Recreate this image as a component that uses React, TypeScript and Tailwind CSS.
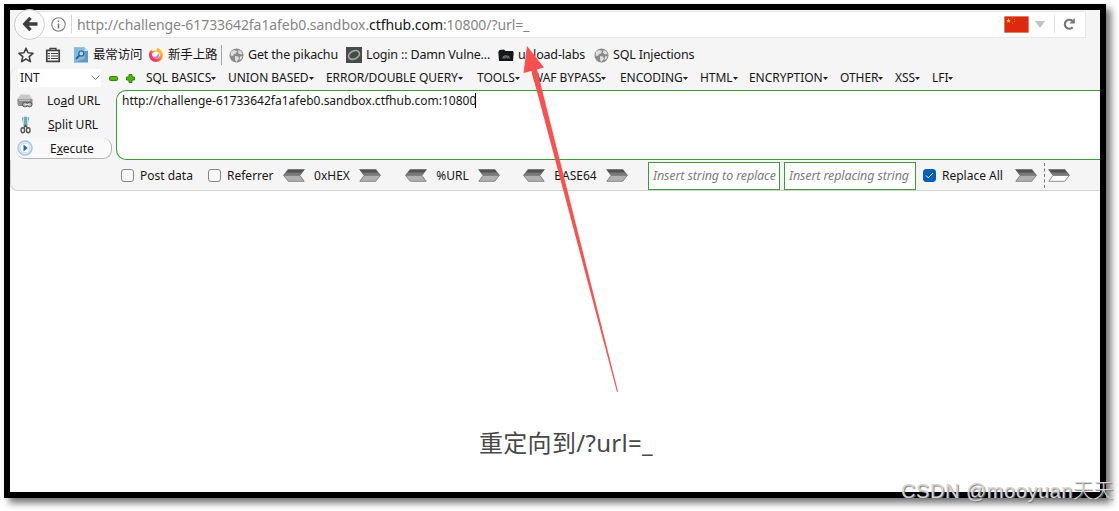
import type { ReactNode } from 'react'
import clsx from 'clsx'

const menus = [
    { label: 'SQL BASICS', width: 'w-[82px]' },
    { label: 'UNION BASED', width: 'w-[98px]' },
    { label: 'ERROR/DOUBLE QUERY', width: 'w-[151px]' },
    { label: 'TOOLS', width: 'w-[55px]' },
    { label: 'WAF BYPASS', width: 'w-[88px]' },
    { label: 'ENCODING', width: 'w-[80px]' },
    { label: 'HTML', width: 'w-[49px]' },
    { label: 'ENCRYPTION', width: 'w-[91px]' },
    { label: 'OTHER', width: 'w-[55px]' },
    { label: 'XSS', width: 'w-[37px]' },
    { label: 'LFI', width: 'w-[30px]' },
]

const BackIcon = () => (
    <svg className="h-4 w-4" viewBox="0 0 16 16" fill="none" stroke="#3d3d3d" strokeWidth="3.4">
        <path d="M8.5 1.8 2.8 8l5.700 6.200M3 8h12.500" />
    </svg>
)

const InfoIcon = () => (
    <svg className="h-[15px] w-[15px]" viewBox="0 0 15 15">
        <circle cx="7.5" cy="7.5" r="6.7" fill="none" stroke="#808080" strokeWidth="1.1" />
        <path d="M7.5 6.5v5M7.5 3.4v1.7" stroke="#777" strokeWidth="1.6" />
    </svg>
)

const FlagIcon = () => (
    <svg className="h-[17px] w-[25px]" viewBox="0 0 25 17">
        <rect width="25" height="17" fill="#dfd0d0" />
        <rect x="0.5" y="0.5" width="24" height="16" fill="#de2910" />
        <path d="m4.5 2.2.6 1.7h1.8L5.5 5l.5 1.8-1.5-1.1L3 6.8 3.5 5 2.1 3.9h1.8z" fill="#ffde00" />
        <path d="M8 1.8h1M10 3.3h1M10 5.3h1M8 7h1" stroke="#e98a10" strokeWidth="1" />
    </svg>
)

const ReloadIcon = () => (
    <svg className="h-[14px] w-[13px]" viewBox="0 0 13 14">
        <path d="M9.7 10.3A4.5 4.5 0 1 1 9.3 3.8" fill="none" stroke="#757575" strokeWidth="2.2" />
        <path d="M11.8 1v5.500H6.3z" fill="#757575" />
    </svg>
)

const StarIcon = () => (
    <svg className="h-4 w-4" viewBox="0 0 16 16" fill="none" stroke="#404040" strokeWidth="1.6" strokeLinejoin="round">
        <path d="m8 1.2 2 4.6 5 .5-3.8 3.3 1.2 5L8 12l-4.400 2.600 1.200-5L1 6.300l5-.5z" />
    </svg>
)

const ListIcon = () => (
    <svg className="h-4 w-4" viewBox="0 0 16 16" fill="none" stroke="#404040">
        <path d="M5 3V1.300h6V3" strokeWidth="1.3" />
        <rect x="1.8" y="3.4" width="12.4" height="11" strokeWidth="1.7" />
        <path d="M3 6.500h2M6 6.500h7M3 9h2M6 9h7M3 11.500h2M6 11.500h7" strokeWidth="1.2" />
    </svg>
)

const SearchPageIcon = () => (
    <svg className="h-4 w-4" viewBox="0 0 16 16">
        <path d="M1 .5h10.500L15 4v11.500H1z" fill="#5d9bc8" />
        <path d="M1 .5h10.500V12L1 15.500z" fill="#85badf" />
        <path d="M11.500.5V4H15z" fill="#cce4f4" />
        <circle cx="8.300" cy="6.500" r="2.500" fill="#b5daf0" stroke="#28618e" strokeWidth="1.2" />
        <path d="m6.500 8.300-3.500 3.500" stroke="#28618e" strokeWidth="1.8" />
    </svg>
)

const FirefoxIcon = () => (
    <svg className="h-4 w-4" viewBox="0 0 16 16">
        <defs>
            <linearGradient id="fox" x1="1" y1="0" x2="0" y2="1">
                <stop offset="0.1" stopColor="#ffdf3c" />
                <stop offset="0.4" stopColor="#ff9a24" />
                <stop offset="0.7" stopColor="#ff3853" />
                <stop offset="1" stopColor="#e52093" />
            </linearGradient>
        </defs>
        <path d="M9 .5c3 1 6 3.500 6 7.500a7 7 0 1 1-14 0c0-2.500 1-4.300 2.500-5.500l.5 2 2-1 2 .5C8.500 3 9.500 2 9 .5z" fill="url(#fox)" />
        <path d="M4 7.200C5 4.500 8 4 10.300 5.200c2.500 1.600 2 5-.8 6-2.800.8-5.300-.8-5.500-4z" fill="#fff" />
        <path d="M5 9c2 1.500 5 .5 5-3 2 2 .8 5.300-1.800 5.600C6.500 11.600 5.300 10.500 5 9z" fill="#b87af0" />
    </svg>
)

const GlobeIcon = () => (
    <svg className="h-[15px] w-[15px]" viewBox="0 0 15 15">
        <circle cx="7.5" cy="7.5" r="7" fill="#8b8b8b" />
        <path d="M2 3.500 5 2l3 1-1 2.500-2 .5-1 2-2.500-.5zM9.500 2l2.500 1 1.500 3-2 .5L9 5zM6 8l3 .5 1 2L7.500 14 6 12zM11 8.500l2.500-.5-1 3-2 1z" fill="#dedede" />
    </svg>
)

const DvwaIcon = () => (
    <svg className="h-4 w-4" viewBox="0 0 16 16">
        <rect width="16" height="16" fill="#454a50" />
        <ellipse cx="8" cy="8" rx="5.8" ry="3.9" fill="none" stroke="#a4ad96" strokeWidth="1.7" transform="rotate(-28 8 8)" />
        <path d="M4 11.500c3 1.500 7 0 8.500-3" fill="none" stroke="#90ab52" strokeWidth="1" />
    </svg>
)

const CameraIcon = () => (
    <svg className="h-3 w-4" viewBox="0 0 16 12">
        <path d="M1.500 1 6 .5 7.500 2H15l.7 2L15 12H1L.3 3z" fill="#15181b" />
        <path d="M4.800 9.500a3.300 3.300 0 0 1 6.500 0M6.500 9.500a1.500 1.500 0 0 1 3 0" fill="none" stroke="#7b7d80" strokeWidth="1.2" />
    </svg>
)

const LoadIcon = () => (
    <svg className="h-[15px] w-4" viewBox="0 0 16 15">
        <path d="M3.500.5h9L15 5v6l-1 1H1L.5 5z" fill="#c9c9c9" />
        <path d="M.5 5h15v5l-1 2h-13L.5 10z" fill="#909090" />
        <path d="M2 6.200h11" stroke="#d5d5d5" />
        <rect x="5.500" y="8.300" width="5" height="4.500" rx="2.200" fill="#b5b5b5" stroke="#505050" />
        <rect x="10" y="8.300" width="5" height="4.500" rx="2.200" fill="#b5b5b5" stroke="#505050" />
        <path d="M8 10.500h4.500" stroke="#e5e5e5" strokeWidth="1.3" />
    </svg>
)

const SplitIcon = () => (
    <svg className="h-[18px] w-[11px]" viewBox="0 0 11 18">
        <path d="M3.500 1 5.500 10M7.500 1 5.500 10" stroke="#77a6bd" strokeWidth="3.6" />
        <path d="M3.500 1v7M7.500 1v7" stroke="#c0dde9" strokeWidth="1" />
        <path d="M4 11.500 5.500 9.500 7 11.500" fill="none" stroke="#555" strokeWidth="1.5" />
        <ellipse cx="2.8" cy="14.3" rx="1.800" ry="2.5" fill="none" stroke="#555" strokeWidth="1.4" />
        <ellipse cx="8.2" cy="14.3" rx="1.800" ry="2.5" fill="none" stroke="#555" strokeWidth="1.4" />
    </svg>
)

const ExecuteIcon = () => (
    <svg className="h-4 w-4" viewBox="0 0 16 16">
        <circle cx="8" cy="8" r="7" fill="#e8f1fc" stroke="#a9c3e6" strokeWidth="1.5" />
        <circle cx="8" cy="8" r="5" fill="#f8fbff" stroke="#c4d7ef" />
        <path d="M6.500 4.500 10.700 8l-4.200 3.500z" fill="#2b68b4" />
    </svg>
)

const ArrowIcon = ({ left, hollow }: { left?: boolean; hollow?: boolean }) => (
    <svg className={clsx('h-[13px] w-[22px] shrink-0', left && '-scale-x-100')} viewBox="0 0 22 13">
        <path d="M0 .3h17l4.800 6.200H5z" fill="#505352" />
        <path d="M2.500 3.500h17l2.300 3H5z" fill="#777978" />
        <path d="M5 6.500h16.300L16.700 12.300H.8z" fill={hollow ? '#fff' : '#b0b0b0'} stroke="#808080" strokeWidth="0.9" />
    </svg>
)

const Bookmark = ({ icon, text, width }: { icon: ReactNode; text: string; width: string }) => (
    <div className={clsx('flex h-[22px] shrink-0 items-center whitespace-nowrap', width)}>
        <span className="mr-1 flex w-4 shrink-0 justify-center">{icon}</span>
        <span className="pt-px">{text}</span>
    </div>
)

const CheckBox = ({ checked }: { checked?: boolean }) => (
    <span
        className={clsx(
            'flex h-[13px] w-[13px] shrink-0 items-center justify-center rounded-[3px] border',
            checked ? 'border-[#005fb8] bg-[#005fb8]' : 'border-[#858585] bg-[#f8f8f8]'
        )}
    >
        {checked && (
            <svg className="h-[9px] w-[9px]" viewBox="0 0 9 9" fill="none" stroke="white">
                <path d="m1 4.500 2.300 2.300L8 2" />
            </svg>
        )}
    </span>
)

const AddressBar = () => (
    <div className="flex h-7 items-center">
        <div className="z-10 ml-1 flex h-[31px] w-[31px] shrink-0 items-center justify-center rounded-full border border-[#cecece] bg-[#fafafa]">
            <BackIcon />
        </div>
        <div className="-ml-3 flex h-[27px] w-[1053px] items-center border-y border-r border-[#e7e7e7] bg-white pl-[18px]">
            <InfoIcon />
            <div className="ml-[5px] h-[18px] w-px bg-[#d6d6d6]" />
            <div className="ml-[5px] w-[927px] text-[14px] tracking-[-0.07px] whitespace-nowrap text-[#858585]">
                http://challenge-61733642fa1afeb0.sandbox.<span className="text-[#151515]">ctfhub.com</span>:10800/?url=_
            </div>
            <FlagIcon />
            <svg className="ml-[6px] h-[7px] w-[10px]" viewBox="0 0 10 7">
                <path d="M0 0h10L5 7z" fill="#c3c3c3" />
            </svg>
            <div className="ml-[9px] h-[18px] w-px bg-[#dedede]" />
            <span className="ml-[8px]">
                <ReloadIcon />
            </span>
        </div>
    </div>
)

const BookmarksBar = () => (
    <div className="flex h-[30px] items-center pt-[4px] pl-2 text-[12.5px] tracking-[-0.17px]">
        <span className="w-[27px]"><StarIcon /></span>
        <span className="w-[28px]"><ListIcon /></span>
        <Bookmark icon={<SearchPageIcon />} text="最常访问" width="w-[75px]" />
        <Bookmark icon={<FirefoxIcon />} text="新手上路" width="w-[73px]" />
        <div className="mr-[6px] h-5 w-px bg-[#a5a5a5]" />
        <Bookmark icon={<GlobeIcon />} text="Get the pikachu" width="w-[118px]" />
        <Bookmark icon={<DvwaIcon />} text="Login :: Damn Vulne..." width="w-[152px]" />
        <Bookmark icon={<CameraIcon />} text="upload-labs" width="w-[95px]" />
        <Bookmark icon={<GlobeIcon />} text="SQL Injections" width="w-[110px]" />
    </div>
)

const MenuBar = () => (
    <div className="flex h-[22px] items-center rounded-tl-lg border-l border-[#dedede] pb-[2px] pl-[7px] text-[12px] tracking-[-0.05px]">
        <div className="flex h-[18px] w-[83px] items-center justify-between bg-white pr-[1px] pl-[2px]">
            INT
            <svg className="h-2 w-[9px]" viewBox="0 0 9 8" fill="none" stroke="#777">
                <path d="m.5 1.500 4 4 4-4" />
            </svg>
        </div>
        <svg className="ml-2 h-[5px] w-[9px]" viewBox="0 0 9 5">
            <rect x="0.5" y="0.5" width="8" height="4" rx="1" fill="#55b516" stroke="#338300" />
        </svg>
        <svg className="ml-2 h-[9px] w-[9px]" viewBox="0 0 9 9">
            <path d="M3 .5h3V3h2.500v3H6v2.500H3V6H.5V3H3z" fill="#55b516" stroke="#338300" />
        </svg>
        <div className="ml-[11px] flex">
            {menus.map((menu) => (
                <div key={menu.label} className={clsx('flex shrink-0 items-center whitespace-nowrap', menu.width)}>
                    {menu.label}
                    <svg className="h-[3px] w-[5px] shrink-0" viewBox="0 0 5 3">
                        <path d="M0 0h5L2.500 3z" fill="#222" />
                    </svg>
                </div>
            ))}
        </div>
    </div>
)

const UrlPanel = () => (
    <div className="flex h-[70px]">
        <div className="w-[106px] shrink-0 pl-[7px] text-[12px]">
            <div className="flex h-[22px] items-center">
                <LoadIcon />
                <span className="ml-[14px]">Lo<u>a</u>d URL</span>
            </div>
            <div className="flex h-[26px] items-center pl-[3px]">
                <SplitIcon />
                <span className="ml-[17px]"><u>S</u>plit URL</span>
            </div>
            <div className="-ml-px flex h-[21px] w-[96px] items-center rounded-[9px] border-r border-b border-[#b3b3b3] bg-[#f9f9f9] pl-px">
                <ExecuteIcon />
                <span className="ml-[17px] pt-px">E<u>x</u>ecute</span>
            </div>
        </div>
        <div className="flex flex-1 items-start rounded-l-[10px] border border-r-0 border-[#399b39] bg-white pt-[2px] pl-[5px] text-[12px] leading-4">
            http://challenge-61733642fa1afeb0.sandbox.ctfhub.com:10800
            <span className="-ml-px h-[15px] w-px bg-black" />
        </div>
    </div>
)

const ReplaceInput = ({ placeholder }: { placeholder: string }) => (
    <div className="flex h-7 w-[132px] shrink-0 items-center border border-[#399b39] bg-white pt-px pl-1 text-[12.5px] tracking-[-0.12px] text-[#7c7c7c] italic">
        {placeholder}
    </div>
)

const OptionsBar = () => (
    <div className="flex h-[31px] items-center rounded-bl-lg border-b border-l border-[#d2d2d2] pt-px pl-[110px] text-[12px] whitespace-nowrap">
        <CheckBox />
        <span className="ml-[6px] w-[68px] shrink-0">Post data</span>
        <CheckBox />
        <span className="ml-[6px] w-[56px] shrink-0">Referrer</span>
        <ArrowIcon left />
        <span className="w-[54px] shrink-0 text-center">0xHEX</span>
        <ArrowIcon />
        <span className="w-6 shrink-0" />
        <ArrowIcon left />
        <span className="w-[51px] shrink-0 text-center">%URL</span>
        <ArrowIcon />
        <span className="w-[23px] shrink-0" />
        <ArrowIcon left />
        <span className="w-[61px] shrink-0 text-center">BASE64</span>
        <ArrowIcon />
        <span className="w-5 shrink-0" />
        <ReplaceInput placeholder="Insert string to replace" />
        <span className="w-1 shrink-0" />
        <ReplaceInput placeholder="Insert replacing string" />
        <span className="ml-[7px]"><CheckBox checked /></span>
        <span className="ml-[6px] w-[73px] shrink-0">Replace All</span>
        <ArrowIcon />
        <span className="mr-[3px] ml-[7px] h-[25px] border-l border-dashed border-[#777]" />
        <ArrowIcon hollow />
    </div>
)

const App = () => (
    <div className="relative h-[511px] w-[1119px] overflow-hidden bg-white pt-1 pl-1 font-['Noto_Sans','Noto_Sans_CJK_SC',sans-serif] text-[#151515]">
        <div className="h-[494px] w-[1102px] border-[6px] border-black bg-white shadow-[5px_5px_7px_rgba(0,0,0,0.55)]">
            <div className="bg-[#f5f5f5]">
                <AddressBar />
                <BookmarksBar />
                <MenuBar />
                <UrlPanel />
                <OptionsBar />
            </div>
            <p className="pt-[234px] pl-[469px] text-[24px] leading-9 tracking-[0.3px] text-[#484848]">重定向到/?url=_</p>
        </div>
        <svg className="absolute top-0 left-0 h-[511px] w-[1119px]" viewBox="0 0 1119 511">
            <path d="M527 46 544 67.500 537 69.500 618 391.500 617 392 531.500 71 523.500 73z" fill="#fb5050" />
        </svg>
        <div className="absolute top-[477px] left-[901px] font-['Liberation_Sans','Noto_Sans_CJK_SC',sans-serif] text-[20px] leading-7 font-light tracking-[0.55px] whitespace-nowrap text-[#d5d5d5] [text-shadow:1px_1px_1px_#777]">
            CSDN @mooyuan天天
        </div>
    </div>
)

export default App
